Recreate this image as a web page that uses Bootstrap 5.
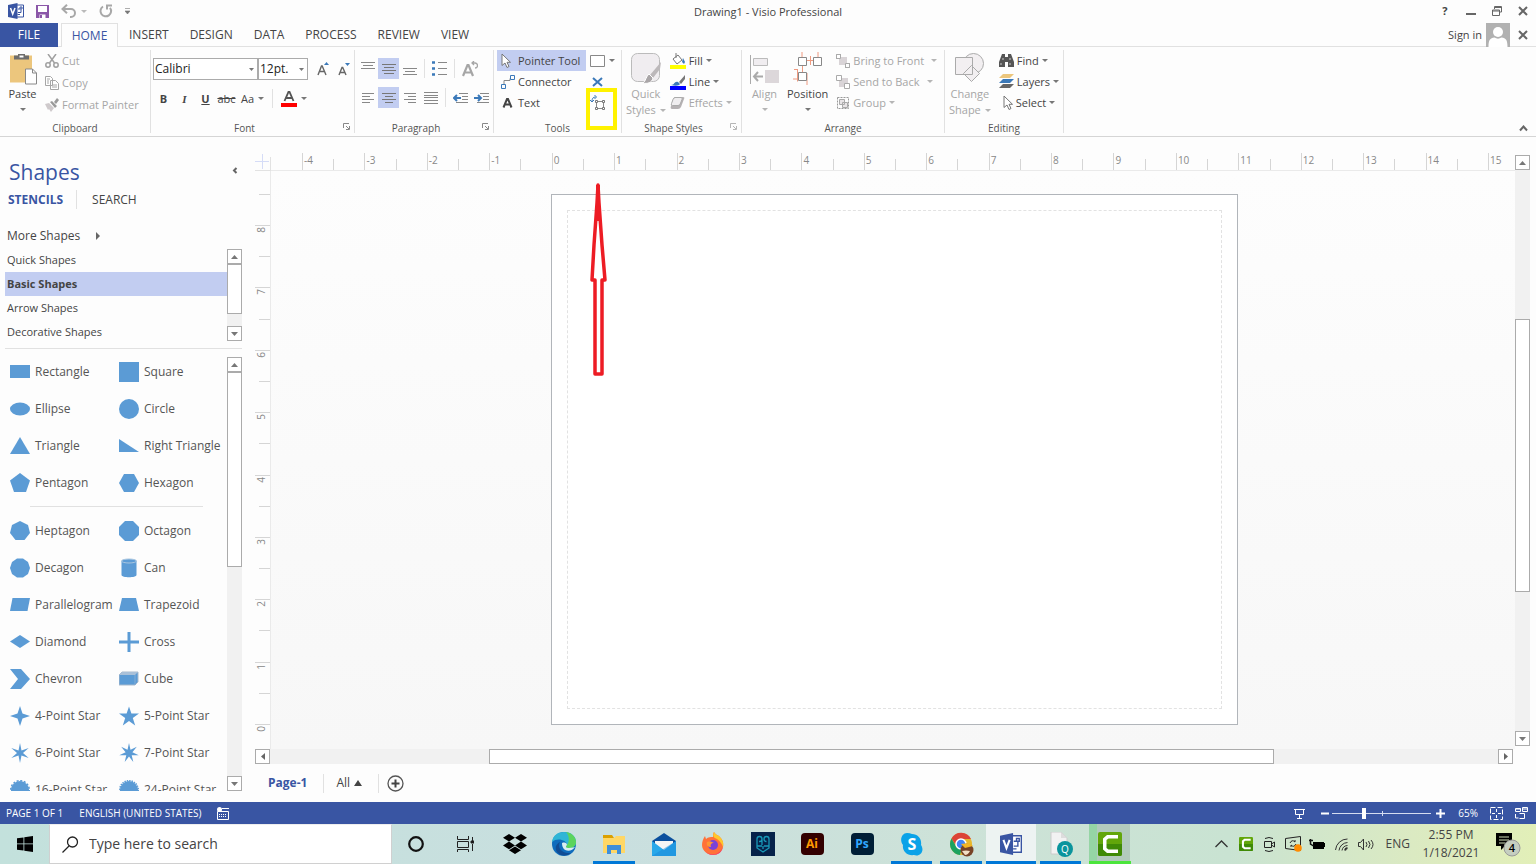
<!DOCTYPE html>
<html lang="en">
<head>
<meta charset="utf-8">
<meta name="viewport" content="width=device-width, initial-scale=1">
<title>Drawing1 - Visio Professional</title>
<link href="https://cdn.jsdelivr.net/npm/bootstrap@5.3.0/dist/css/bootstrap.min.css" rel="stylesheet">
<style>
:root{--brand:#3955a3;--pick:#c2cdf1;--ink:#444;--dim:#a6a6a6;--edge:#e1e1e1;--shape:#5b9bd5}
body{font-family:"Open Sans","Noto Sans",sans-serif;font-size:12px;line-height:16px;color:var(--ink);background:#fdfdfd;overflow:hidden}
svg{display:block;flex:none}
button{font:inherit;color:inherit;background:none;border:0;padding:0;white-space:nowrap;display:flex;align-items:center}
button:disabled{color:var(--dim)}
a{color:inherit;text-decoration:none}
.titlebar,.tabs-row,.ribbon,.status,.taskbar{flex:none}
.titlebar{height:23px;font-size:11px}
.titlebar button{height:22px}
.winbtn{width:26px;justify-content:center}
.tabs-row{height:24px;border-bottom:1px solid var(--edge)}
.tab-link{height:24px;padding:0 10px 0 11px;line-height:24px}
.tab-file{width:58px;padding:0;text-align:center;background:var(--brand);color:#fff}
.tab-on{margin-left:3px;width:57px;padding:0;text-align:center;background:#fdfdfd;border:1px solid var(--edge);border-bottom:0;color:var(--brand)}
.signin{font-size:11px}
.ribbon{height:90px;border-bottom:1px solid #d5d5d5;font-size:11px}
.rgroup{border-right:1px solid var(--edge);margin:3px 0;position:relative}
.gbody{height:69px}
.gname{font-size:10px;line-height:16px;text-align:center;color:#555;padding-top:1px}
.launcher{position:absolute;right:4px;bottom:3px}
.g-clip{width:151px}.g-font{width:204px}.g-para{width:139px}.g-tools{width:128px}.g-style{width:120px}.g-arr{width:203px}.g-edit{width:119px}
.row22{height:22px;gap:3px}
.row21{height:21px;gap:3px}
.inset{padding-left:2px}
.toolcol{width:89px;margin:0 4px 0 3px}
.car{width:0;height:0;border:3px solid transparent;border-top-color:#777;border-bottom:0;flex:none}
button:disabled .car{border-top-color:#b5b5b5}
.big{flex-direction:column;align-items:center;line-height:16px}
.big svg{margin-top:1px}
.big>.car{margin-top:6px}
.sq{width:21px;height:21px;justify-content:center}
.on{background:var(--pick)}
.vr1{width:1px;height:19px;background:var(--edge)}
.combo{appearance:none;border:1px solid #ababab;height:22px;padding:0 1px;border-radius:0;background:#fff url("data:image/svg+xml,%3Csvg xmlns='http://www.w3.org/2000/svg' width='5' height='3'%3E%3Cpath d='M0 0h5L2.5 3z' fill='%23777'/%3E%3C/svg%3E") no-repeat right 3px center;color:#222;font:inherit;font-size:12px}
.hilite{position:absolute;left:92px;top:38px;width:31px;height:42px;border:4px solid #fff200;pointer-events:none}
.work{flex:1 1 0;min-height:0}
.panel{width:246px;padding:21px 4px 11px 5px}
.panel h1{font-size:21px;line-height:28px;color:var(--brand);font-weight:400}
.panel-tabs{margin-top:4px;padding-left:3px}
.panel-tabs .vr1{margin:0 15px 0 13px}
.more{margin-top:19px;padding-left:2px;gap:16px;font-size:12px}
.stencils{margin-top:4px;font-size:11px}
.stencil{height:24px;line-height:24px;padding-left:2px;display:block}
.sbar{width:15px;background:#f1f1f1;display:flex;flex-direction:column}
.stencils .sbar{margin:1px 0 3px}
.sbar button,.hbar button{width:15px;height:15px;border:1px solid #ababab;background:#fff;justify-content:center;flex:none}
.thumb{background:#fff;border:1px solid #ababab}
.shape-grid{display:grid;grid-template-columns:109px 108px;grid-auto-rows:37px;color:#555;padding-left:5px}
.shape-grid button{gap:5px}
.shape-grid svg{fill:var(--shape)}
.rule{border-top:1px solid var(--edge)}
.inner-rule{margin:5px 24px 5px 25px}
.drawing{padding:16px 0 0 9px}
.hruler{height:18px;border-bottom:1px solid #eaeaea;padding-left:31px;font-size:10px;line-height:14px;color:#888}
.hruler span,.vruler span{flex:1 1 0;background:linear-gradient(#d5d5d5,#d5d5d5) no-repeat}
.hruler span{border-left:1px solid #d5d5d5;padding-left:1px;background-size:1px 11px;background-position:50% 100%}
.hruler .tail{flex:0 0 27px;background:none}
.vruler{width:16px;border-right:1px solid #eaeaea;font-size:10px;line-height:13px;color:#888}
.vruler span{border-top:1px solid #d5d5d5;background-size:11px 1px;background-position:100% 50%}
.vruler .head{flex:0 0 54px;border:0;background-position:100% 23px}
.vruler .tail{flex:0 0 25px;background:none}
.vruler b{display:block;font-weight:400;writing-mode:vertical-rl;transform:rotate(180deg);width:13px;text-align:right;padding-bottom:1px}
.canvas{background:linear-gradient(#fdfdfd,#f7f7f7);padding:23px 277px 24px 280px;position:relative}
.sheet{background:#fff;border:1px solid #b1b5ba;padding:15px}
.sheet div{border:1px dashed #e2e2e2;height:100%}
.arrow{position:absolute;left:318px;top:12px}
.vbar{margin:2px 6px 3px 0}
.hbar{height:15px;background:#f1f1f1;display:flex;margin-right:23px}
.pages{height:38px;padding-left:13px}
.status{height:22px;background:var(--brand);color:#fff;font-size:10px}
.status>span:first-child{padding-left:6px}
.taskbar{height:40px;background:linear-gradient(90deg,#c3e1dc,#c9dfdf 40%,#cde2d8 62%,#c9e3d2 80%,#dbeac2 92%,#e2efb8)}
.find-box{width:343px;background:#fff;border:1px solid #d0d0d0;border-top-color:#eee}
.find-box input{border:0;outline:0;font-size:14px;color:#333;background:none;width:250px}
.find-box input::placeholder{color:#444;opacity:1}
.tk{flex:1 1 0;justify-content:center;position:relative;height:40px}
.run::after{content:"";position:absolute;left:4px;right:4px;bottom:0;height:3px;background:#0078d7}
.cur{background:#edf3f2}.cur::after{left:0;right:0}
.rec{background:linear-gradient(90deg,#95d5a5 8px,#b2cabd 8px) 4px 0/41px 100% no-repeat}
.rec::after{background:#4be53c}
.tray .ti{width:24px;justify-content:center}
.clock{line-height:18px;width:74px}
.notify{margin:0 14px 0 8px}
</style>
</head>
<body class="d-flex flex-column vh-100">
<svg width="0" height="0" class="position-absolute">
<defs>
<symbol id="visio" viewBox="0 0 16 16"><path d="M7 2h8.500v12H7z" fill="#fff" stroke="#3955a3"/><path d="M0 2l9.500-2v16L0 14z" fill="#3955a3"/><path d="M2.500 5l2.200 6L7 5" fill="none" stroke="#fff" stroke-width="1.500"/><path d="M10 9.500h3v-3M10 6h2M12 4h2v2h-2zM9.500 11.500h2.500" fill="none" stroke="#3955a3"/></symbol>
<symbol id="up" viewBox="0 0 7 4"><path d="M0 4h7L3.500 0z" fill="#777"/></symbol>
<symbol id="down" viewBox="0 0 7 4"><path d="M0 0h7L3.500 4z" fill="#777"/></symbol>
<symbol id="launch" viewBox="0 0 7 7"><path d="M.5 5V.5H6M3 3l3 3M6.500 3v3.500H3" fill="none" stroke="#888"/></symbol>
<symbol id="cursor" viewBox="0 0 10 16"><path d="M1 1v11.500l3-2.500 2 4.500 2-1-2-4.200h3.500z" fill="#fff" stroke="#777"/></symbol>
<symbol id="cam" viewBox="0 0 24 24"><rect width="24" height="24" rx="2" fill="#62a60a"/><path d="M0 12h24v10a2 2 0 0 1-2 2H2a2 2 0 0 1-2-2z" fill="#3f8a06"/><path d="M20 3H9L5 6.500v11L9 21h11v-3.500h-9.500L8.500 16V8l2-1.500H20z" fill="#fff"/></symbol>
</defs></svg>

<header class="titlebar d-flex">
<div class="d-flex flex-fill w-50">
<button class="ps-2" aria-label="Visio"><svg width="16" height="16"><use href="#visio"/></svg></button>
<button class="ms-2 ps-1" aria-label="Save"><svg width="13" height="13" viewBox="0 0 13 13"><path d="M0 0h13v13H0z" fill="#8b57a8"/><path d="M2 1h9v6H2z" fill="#fff"/><path d="M3.500 9.500h6V13h-6z" fill="#fff"/><path d="M4 10h2v3H4z" fill="#8b57a8"/></svg></button>
<button class="ms-2 ps-1 gap-1" aria-label="Undo"><svg width="16" height="14" viewBox="0 0 16 14"><path d="M1.500 5H10a4 4 0 0 1 0 8H9M6 .8L1.500 5 6 9.200" fill="none" stroke="#a8a8a8" stroke-width="2"/></svg><i class="car opacity-50"></i></button>
<button class="ms-2 ps-1" aria-label="Repeat"><svg width="14" height="14" viewBox="0 0 14 14"><path d="M4 2.500A5.300 5.300 0 1 0 11 3.800M8 5.500V1.500h5" fill="none" stroke="#a8a8a8" stroke-width="2"/></svg></button>
<button class="ms-2 ps-1" aria-label="Customize"><svg width="5" height="6" viewBox="0 0 5 6"><path d="M0 .5h5M0 3h5L2.500 6z" fill="#777" stroke="#777" stroke-width=".6"/></svg></button>
</div>
<div class="align-self-center text-center text-nowrap">Drawing1 - Visio Professional</div>
<div class="d-flex flex-fill w-50 justify-content-end">
<button class="winbtn fw-bold">?</button>
<button class="winbtn" aria-label="Minimize"><svg width="10" height="10"><path d="M0 8h10" stroke="#666" stroke-width="2"/></svg></button>
<button class="winbtn" aria-label="Restore"><svg width="10" height="10" viewBox="0 0 10 10"><path d="M2.500 3V.5h7V6H8M.5 4h7v5.500h-7zM2.500 1.500h7M.5 5h7" fill="none" stroke="#666"/></svg></button>
<button class="winbtn" aria-label="Close"><svg width="10" height="10"><path d="M1 1l8 8M9 1L1 9" stroke="#666" stroke-width="2"/></svg></button>
</div>
</header>

<nav class="tabs-row d-flex">
<a href="#" class="tab-link tab-file">FILE</a><a href="#" class="tab-link tab-on">HOME</a><a href="#" class="tab-link">INSERT</a><a href="#" class="tab-link">DESIGN</a><a href="#" class="tab-link">DATA</a><a href="#" class="tab-link">PROCESS</a><a href="#" class="tab-link">REVIEW</a><a href="#" class="tab-link">VIEW</a>
<div class="ms-auto d-flex">
<button class="signin">Sign in</button>
<svg class="ms-1" width="24" height="24" viewBox="0 0 24 24"><path d="M0 0h24v24H0z" fill="#b1b1b1"/><circle cx="12" cy="9" r="5" fill="#fff"/><path d="M2.500 24c0-7 1.500-9 6-9.500 2 1.500 5 1.500 7 0 4.500.5 6 2.500 6 9.500z" fill="#fff"/></svg>
<button class="winbtn" aria-label="Close document"><svg width="10" height="10"><path d="M1 1l8 8M9 1L1 9" stroke="#666" stroke-width="2"/></svg></button>
</div>
</nav>

<section class="ribbon d-flex">
<div class="rgroup g-clip">
<div class="gbody d-flex">
<button class="big ms-2 me-2"><svg width="29" height="35" viewBox="0 0 29 34"><path d="M2 4h22v27H2z" fill="#ecc67d"/><path d="M6 8V4h4V2.500h7V4h4v4z" fill="#6d6d6d"/><path d="M11.500 4h4v2h-4z" fill="#fff"/><path d="M17.500 17.500h7l4 4v11h-11z" fill="#fff" stroke="#888"/><path d="M24.500 17.500v4h4" fill="none" stroke="#888"/></svg><span>Paste</span><i class="car"></i></button>
<div class="d-flex flex-column">
<button disabled class="row22"><svg width="14" height="14" viewBox="0 0 14 14" fill="none" stroke="#a0a0a0" stroke-width="1.500"><path d="M3 0l6.500 9M11 0L4.500 9"/><circle cx="3" cy="11" r="2.200"/><circle cx="11" cy="11" r="2.200"/></svg>Cut</button>
<button disabled class="row22"><svg width="14" height="14" viewBox="0 0 14 14" fill="#fff" stroke="#a6a6a6"><path d="M.5.500h5l2 2v7h-7zM5.500 4.500h5l3 3v6h-8zM7 9h5M7 11h5M2 3h3M2 5h2M2 7h2"/></svg>Copy</button>
<button disabled class="row22"><svg width="14" height="14" viewBox="0 0 14 14"><path d="M0 6l4-1 5 5-3 4-2-3-1 1z" fill="#cfcacc"/><path d="M5 4l2-1 5 5-2 2zM9 4l3-4 2 2-3 4z" fill="#9a9a9a"/></svg>Format Painter</button>
</div></div>
<div class="gname">Clipboard</div></div>

<div class="rgroup g-font">
<div class="gbody inset">
<div class="d-flex align-items-center pt-2">
<select class="combo" style="width:106px" aria-label="Font"><option>Calibri</option></select><select class="combo me-1" style="width:51px" aria-label="Font size"><option>12pt.</option></select>
<button class="sq" aria-label="Grow font"><svg width="12" height="15" viewBox="0 0 12 15"><path d="M1 13L4.500 4h.7L9 13M2.300 9.500h5.200" fill="none" stroke="#666" stroke-width="1.400"/><path d="M7 3h5L9.500 0z" fill="#3b79b9"/></svg></button>
<button class="sq" aria-label="Shrink font"><svg width="12" height="15" viewBox="0 0 12 15"><path d="M1 13L4 5.500h.7L8 13M2.300 10.500h4.400" fill="none" stroke="#666" stroke-width="1.400"/><path d="M7 1h5L9.500 4z" fill="#3b79b9"/></svg></button>
</div>
<div class="d-flex align-items-center mt-2">
<button class="sq fw-bold">B</button><button class="sq fw-bold fst-italic" style="font-family:'Liberation Serif',serif">I</button><button class="sq fw-bold text-decoration-underline">U</button><button class="sq"><s>abc</s></button>
<button class="gap-1 ps-1">Aa<i class="car"></i></button><i class="vr1 ms-2"></i>
<button class="gap-1 ms-2"><svg width="16" height="16" viewBox="0 0 16 16"><path d="M3.500 10L7.500.8h1L12.500 10M5 7h6" fill="none" stroke="#555" stroke-width="1.800"/><path d="M0 12h16v4H0z" fill="#f00"/></svg><i class="car"></i></button>
</div></div>
<div class="gname me-3">Font</div><button class="launcher" aria-label="Font settings"><svg width="7" height="7"><use href="#launch"/></svg></button></div>

<div class="rgroup g-para">
<div class="gbody inset">
<div class="d-flex align-items-center pt-2">
<button class="sq" aria-label="Top"><svg width="14" height="14"><path d="M0 .5h14M2 3.500h10M0 6.500h14" stroke="#888"/></svg></button>
<button class="sq on" aria-label="Middle"><svg width="14" height="14"><path d="M0 2.500h14M2 5.500h10M0 8.500h14M2 11.500h10" stroke="#777"/></svg></button>
<button class="sq" aria-label="Bottom"><svg width="14" height="14"><path d="M0 6.500h14M2 9.500h10M0 12.500h14" stroke="#888"/></svg></button>
<i class="vr1 mx-1"></i>
<button class="sq" aria-label="Bullets"><svg width="15" height="15"><path d="M0 1.500h3M0 7.500h3M0 13.500h3" stroke="#3b79b9" stroke-width="2.500"/><path d="M6 1.500h9M6 7.500h9M6 13.500h9" stroke="#888"/></svg></button>
<i class="vr1 mx-1"></i>
<button class="sq" aria-label="Rotate text"><svg width="16" height="16" viewBox="0 0 16 16"><path d="M1 15L5.500 4h1L11 15M2.500 11.500h7" fill="none" stroke="#a6a6a6" stroke-width="2.200"/><path d="M10 2h3a2.500 2.500 0 0 1 0 5M12 0l-2 2 2 2" fill="none" stroke="#a6a6a6" stroke-width="1.300"/></svg></button>
</div>
<div class="d-flex align-items-center mt-2">
<button class="sq" aria-label="Left"><svg width="12" height="12"><path d="M0 1.500h12M0 4.500h8M0 7.500h12M0 10.500h8" stroke="#888"/></svg></button>
<button class="sq on" aria-label="Center"><svg width="14" height="12"><path d="M0 1.500h14M3 4.500h8M0 7.500h14M3 10.500h8" stroke="#777"/></svg></button>
<button class="sq" aria-label="Right"><svg width="12" height="12"><path d="M0 1.500h12M4 4.500h8M0 7.500h12M4 10.500h8" stroke="#888"/></svg></button>
<button class="sq" aria-label="Justify"><svg width="14" height="12"><path d="M0 .5h14M0 3.500h14M0 5.500h14M0 8.500h14M0 11.500h14" stroke="#888"/></svg></button>
<i class="vr1 ms-1 me-1"></i>
<button class="sq" aria-label="Outdent"><svg width="15" height="12"><path d="M6 1.500h9M9 4.500h6M9 7.500h6M3 10.500h12" stroke="#888"/><path d="M1 6h7M4 3L1 6l3 3" fill="none" stroke="#3b79b9" stroke-width="2"/></svg></button>
<button class="sq" aria-label="Indent"><svg width="15" height="12"><path d="M6 1.500h9M9 4.500h6M9 7.500h6M3 10.500h12" stroke="#888"/><path d="M0 6h7M4 3l3 3-3 3" fill="none" stroke="#3b79b9" stroke-width="2"/></svg></button>
</div></div>
<div class="gname me-3">Paragraph</div><button class="launcher" aria-label="Paragraph settings"><svg width="7" height="7"><use href="#launch"/></svg></button></div>

<div class="rgroup g-tools">
<div class="gbody d-flex">
<div class="toolcol d-flex flex-column">
<button class="row21 on ps-1"><svg width="10" height="16"><use href="#cursor"/></svg><span class="ps-1">Pointer Tool</span></button>
<button class="row21 ps-1"><svg width="14" height="14" viewBox="0 0 14 14" fill="none"><path d="M3 9.500V5.500h6V3.500" stroke="#888"/><path d="M.5 9.500h4v4h-4zM9.500.500h4v4h-4z" stroke="#3b79b9"/></svg>Connector</button>
<button class="row21 ps-1"><svg width="14" height="10"><path d="M2.500 9.500L6 1h1l3.500 8.500M4 6.500h5" fill="none" stroke="#444" stroke-width="2"/></svg>Text</button>
</div>
<div class="d-flex flex-column">
<button class="row21 gap-1" aria-label="Rectangle tool"><svg width="15" height="12"><path d="M.5.500h14v11H.500z" fill="#fff" stroke="#888"/></svg><i class="car"></i></button>
<button class="row21" aria-label="Connection point"><svg width="15" height="10"><path d="M3 1l9 8M12 1L3 9" stroke="#3b79b9" stroke-width="2"/></svg></button>
<button class="row21" aria-label="Text block"><svg width="16" height="16" viewBox="0 0 16 16" fill="none"><path d="M2 6.500C2 3.500 3 2 5.500 2M4.500 0l2 2-2 2M0 5l2 2 2-2" stroke="#3b79b9"/><path d="M6.500 6.500h7v7h-7z" stroke="#888"/><path d="M5.500 5.500h2v2h-2zM12.500 5.500h2v2h-2zM5.500 12.500h2v2h-2zM12.500 12.500h2v2h-2z" fill="#fff" stroke="#777"/></svg></button>
</div></div>
<div class="gname">Tools</div><div class="hilite"></div></div>

<div class="rgroup g-style">
<div class="gbody d-flex ps-1">
<button disabled class="big me-1"><svg width="32" height="35" viewBox="0 0 32 33"><rect x="1.500" y="1.500" width="28" height="28" rx="6" fill="#f0edf0" stroke="#bbb"/><path d="M31 10l-11 13 3 3 7-9z" fill="#bcb8ba"/><path d="M19 22l4 4c-1 5-6 6-10 5 3-2 3-7 6-9z" fill="#aaa6a8" stroke="#fff"/></svg><span>Quick</span><span class="d-flex align-items-center gap-1">Styles<i class="car"></i></span></button>
<div class="d-flex flex-column">
<button class="row21"><svg width="16" height="16" viewBox="0 0 16 16"><path d="M3 6l5-4 4 5-5 4zM6 0v5" fill="#fff" stroke="#777"/><path d="M13 5l2 4-1 2-2-2z" fill="#3b79b9"/><path d="M0 12h16v4H0z" fill="#ff0"/></svg>Fill<i class="car"></i></button>
<button class="row21"><svg width="16" height="16" viewBox="0 0 16 16"><path d="M15 1L9 8l2 2 4-5z" fill="#777"/><path d="M1 11c4 0 3-4 7-3l2 2c-1 2-5 2-9 1z" fill="#3b79b9"/><path d="M0 12h16v4H0z" fill="#00f"/></svg>Line<i class="car"></i></button>
<button disabled class="row21"><svg width="16" height="14" viewBox="0 0 16 14"><path d="M5 1h8q2 0 1 2l-3 8q-1 2-3 2H2q-2 0-1-3l2-7q1-2 2-2z" fill="#b5b1b3"/><path d="M5 1.500h6q2 0 1 2l-2 5q-1 1-2 1H2.500q-2 0-1-2l1.500-4q1-2 2-2z" fill="#efedef" stroke="#aaa"/></svg>Effects<i class="car"></i></button>
</div></div>
<div class="gname me-3">Shape Styles</div><button class="launcher" disabled aria-label="Shape settings"><svg width="7" height="7" opacity=".6"><use href="#launch"/></svg></button></div>

<div class="rgroup g-arr">
<div class="gbody d-flex ps-2">
<button disabled class="big"><svg width="29" height="35" viewBox="0 0 29 33"><path d="M.5 3v29" stroke="#aaa"/><path d="M3.500 6.500h14v7h-14z" fill="#f0edf0" stroke="#bbb"/><path d="M15 18h14v13H15z" fill="#dcd7da"/><path d="M4 24.500h9M8 20l-4 4.500L8 29" fill="none" stroke="#aaa" stroke-width="2"/></svg><span>Align</span><i class="car"></i></button>
<button class="big mx-2"><svg width="30" height="35" viewBox="0 0 30 33" fill="none"><path d="M13 8.500h8M17.500 4v9M1 17.500h4M4.500 17.500v12M9.500 13v8M25 0v5M9 0v5M0 27h5M14 21v12" stroke="#ef9a80"/><path d="M5.500 5.500h8v8h-8zM20.500 5.500h8v8h-8zM5.500 20.500h8v8h-8z" fill="#fff" stroke="#888"/></svg><span>Position</span><i class="car"></i></button>
<div class="d-flex flex-column">
<button disabled class="row21"><svg width="14" height="14" viewBox="0 0 14 14"><path d="M3 3h8v8H3z" fill="#d9d4d7"/><path d="M.5 5V.500H5M9 13.500h4.500V9M.5.500h4v4h-4zM9.500 9.500h4v4h-4z" fill="#fff" stroke="#aaa"/></svg>Bring to Front<i class="car ms-1"></i></button>
<button disabled class="row21"><svg width="14" height="14" viewBox="0 0 14 14"><path d="M3 3h9v9H3z" fill="#d9d4d7"/><path d="M.5.500h5v5h-5zM8.500 8.500h5v5h-5z" fill="#fff" stroke="#aaa"/></svg>Send to Back<i class="car ms-1"></i></button>
<button disabled class="row21"><svg width="14" height="14" viewBox="0 0 14 14"><path d="M1.500 1.500h11v11h-11z" fill="none" stroke="#999" stroke-dasharray="2 1"/><path d="M3.500 3.500h5v5h-5zM6.500 6.500h5v5h-5z" fill="#e8e4e6" stroke="#aaa"/></svg>Group<i class="car"></i></button>
</div></div>
<div class="gname">Arrange</div></div>

<div class="rgroup g-edit">
<div class="gbody d-flex ps-1">
<button disabled class="big me-2"><svg width="32" height="35" viewBox="0 0 32 33" fill="#f2eff1" stroke="#aaa"><circle cx="19.500" cy="11.500" r="10"/><path d="M1.500 5.500h17v17h-17zM17.500 13.500l8 8-8 8-8-8z"/></svg><span>Change</span><span class="d-flex align-items-center gap-1">Shape<i class="car"></i></span></button>
<div class="d-flex flex-column">
<button class="row21"><svg width="15" height="13" viewBox="0 0 15 13"><path d="M3 0h3v3h3V0h3l3 8v5H9V8H6v5H0V8z" fill="#555"/><path d="M2 9v2M11 9v2M4 4v2M11 4v2" stroke="#ccc"/></svg>Find<i class="car"></i></button>
<button class="row21"><svg width="15" height="15" viewBox="0 0 15 15"><path d="M4 0h11l-4 4H0z" fill="#ecc67d"/><path d="M4 5h11l-4 4H0z" fill="#3b79b9"/><path d="M4 10h11l-4 4H0z" fill="#666"/></svg>Layers<i class="car"></i></button>
<button class="row21 ps-1"><svg width="10" height="16"><use href="#cursor"/></svg>Select<i class="car"></i></button>
</div></div>
<div class="gname">Editing</div></div>
<button class="winbtn ms-auto align-self-end mb-1" aria-label="Collapse ribbon"><svg width="9" height="7"><path d="M1 5.500l3.500-4 3.500 4" fill="none" stroke="#666" stroke-width="2"/></svg></button>
</section>

<main class="work d-flex overflow-hidden">
<aside class="panel d-flex flex-column flex-shrink-0">
<div class="d-flex justify-content-between align-items-center ps-1 pe-1"><h1 class="m-0">Shapes</h1><button class="pb-1" aria-label="Collapse panel"><svg width="6" height="7"><path d="M4.500 1L2 3.500 4.500 6" fill="none" stroke="#666" stroke-width="2"/></svg></button></div>
<div class="panel-tabs d-flex align-items-center"><a href="#" class="fw-bold" style="color:var(--brand)">STENCILS</a><i class="vr1"></i><a href="#">SEARCH</a></div>
<button class="more"><span>More Shapes</span><svg width="4" height="8"><path d="M0 0l4 4-4 4z" fill="#666"/></svg></button>
<div class="stencils d-flex">
<div class="flex-fill"><a href="#" class="stencil">Quick Shapes</a><a href="#" class="stencil on fw-bold">Basic Shapes</a><a href="#" class="stencil">Arrow Shapes</a><a href="#" class="stencil">Decorative Shapes</a></div>
<div class="sbar"><button aria-label="Up"><svg width="7" height="4"><use href="#up"/></svg></button><div class="thumb" style="flex:0 0 50px"></div><div class="flex-fill"></div><button aria-label="Down"><svg width="7" height="4"><use href="#down"/></svg></button></div>
</div>
<div class="rule mt-1 mb-1"></div>
<div class="work d-flex overflow-hidden">
<div class="flex-fill overflow-hidden">
<div class="shape-grid">
<button><svg width="20" height="20"><path d="M0 3h20v13H0z"/></svg>Rectangle</button>
<button><svg width="20" height="20"><path d="M0 0h20v20H0z"/></svg>Square</button>
<button><svg width="20" height="20"><ellipse cx="10" cy="10" rx="10" ry="6.500"/></svg>Ellipse</button>
<button><svg width="20" height="20"><circle cx="10" cy="10" r="10"/></svg>Circle</button>
<button><svg width="20" height="20"><path d="M10 1l10 17H0z"/></svg>Triangle</button>
<button><svg width="20" height="20"><path d="M0 3l20 13H0z"/></svg>Right Triangle</button>
<button><svg width="20" height="20"><path d="M10 0l10 7.500L16 19H4L0 7.500z"/></svg>Pentagon</button>
<button><svg width="20" height="20"><path d="M5 1h10l5 9-5 9H5l-5-9z"/></svg>Hexagon</button>
</div>
<div class="rule inner-rule"></div>
<div class="shape-grid">
<button><svg width="20" height="20"><path d="M10 0l8 4 2 8-5.500 7h-9L0 12l2-8z"/></svg>Heptagon</button>
<button><svg width="20" height="20"><path d="M6 0h8l6 6v8l-6 6H6l-6-6V6z"/></svg>Octagon</button>
<button><svg width="20" height="20"><path d="M7 .5h6L18 4l2 6-2 6-5 3.500H7L2 16l-2-6 2-6z"/></svg>Decagon</button>
<button><svg width="20" height="20"><path d="M2.500 3v14c0 3 15 3 15 0V3z"/><ellipse cx="10" cy="3" rx="7.500" ry="2" stroke="#a9c6e0"/></svg>Can</button>
<button><svg width="20" height="20"><path d="M2.500 3H20l-2.500 13H0z"/></svg>Parallelogram</button>
<button><svg width="20" height="20"><path d="M3 3h14l3 13H0z"/></svg>Trapezoid</button>
<button><svg width="20" height="20"><path d="M10 3l10 6.500L10 16 0 9.500z"/></svg>Diamond</button>
<button><svg width="20" height="20"><path d="M8.500 0h3v8.500H20v3h-8.500V20h-3v-8.500H0v-3h8.500z"/></svg>Cross</button>
<button><svg width="20" height="20"><path d="M0 0h11l9 10-9 10H0l8-10z"/></svg>Chevron</button>
<button><svg width="20" height="20"><path d="M0 6l3-3h16v10l-3 3H0z" stroke="#a9b9cb"/><path d="M0 6l3-3h16l-3 3z" fill="#a9c0d8"/><path d="M16 6v10" stroke="#83acd5"/></svg>Cube</button>
<button><svg width="20" height="20"><path d="M10 0l2.500 7.500L20 10l-7.500 2.500L10 20l-2.500-7.500L0 10l7.500-2.500z"/></svg>4-Point Star</button>
<button><svg width="20" height="20"><path d="M10 .5l2.400 7H20L13.800 12l2.400 7.500L10 15l-6.200 4.500L6.200 12 0 7.500h7.600z"/></svg>5-Point Star</button>
<button><svg width="20" height="20"><path d="M10 0L11.500 7.400 18.700 5 13 10 18.700 15 11.500 12.600 10 20 8.500 12.600 1.300 15 7 10 1.300 5 8.500 7.400z"/></svg>6-Point Star</button>
<button><svg width="20" height="20"><path d="M10 0L11.500 6.800 17.800 3.800 13.400 9.200 19.700 12.200 12.700 12.200 14.300 19 10 13.500 5.700 19 7.300 12.200 .3 12.200 6.600 9.200 2.200 3.800 8.500 6.800z"/></svg>7-Point Star</button>
<button><svg width="20" height="20"><circle cx="10" cy="10" r="9"/><circle cx="10" cy="10" r="9.300" fill="none" stroke="#5b9bd5" stroke-width="1.500" stroke-dasharray="2 1.650"/></svg>16-Point Star</button>
<button><svg width="20" height="20"><circle cx="10" cy="10" r="9"/><circle cx="10" cy="10" r="9.300" fill="none" stroke="#5b9bd5" stroke-width="1.500" stroke-dasharray="1.400 1.030"/></svg>24-Point Star</button>
</div></div>
<div class="sbar mt-1"><button aria-label="Up"><svg width="7" height="4"><use href="#up"/></svg></button><div class="thumb" style="flex:0 0 45%"></div><div class="flex-fill"></div><button aria-label="Down"><svg width="7" height="4"><use href="#down"/></svg></button></div>
</div>
</aside>

<section class="drawing d-flex flex-column flex-fill overflow-hidden">
<div class="work d-flex">
<div class="d-flex flex-column flex-fill">
<div class="d-flex"><svg width="16" height="18"><path d="M0 8.500h14M7.500 1v15" stroke="#d5dcf7"/><path d="M15.500 4v14M0 17.500h16" stroke="#e2e2e2"/></svg>
<div class="hruler d-flex flex-fill"><span>-4</span><span>-3</span><span>-2</span><span>-1</span><span>0</span><span>1</span><span>2</span><span>3</span><span>4</span><span>5</span><span>6</span><span>7</span><span>8</span><span>9</span><span>10</span><span>11</span><span>12</span><span>13</span><span>14</span><span class="tail">15</span></div></div>
<div class="d-flex flex-fill">
<div class="vruler d-flex flex-column"><span class="head"></span><span><b>8</b></span><span><b>7</b></span><span><b>6</b></span><span><b>5</b></span><span><b>4</b></span><span><b>3</b></span><span><b>2</b></span><span><b>1</b></span><span class="tail"><b>0</b></span></div>
<div class="canvas flex-fill"><div class="sheet h-100"><div></div></div>
<svg class="arrow" width="18" height="194" viewBox="0 0 18 194" fill="none" stroke="#ed1c24" stroke-width="3.500" stroke-linejoin="round"><path d="M9 2L8 20 5 62 3 97h3v94h7V97h3L13 62 10 20z"/><path d="M9 2v36" stroke-width="4"/></svg>
</div></div></div>
<div class="sbar vbar"><button aria-label="Up"><svg width="7" height="4"><use href="#up"/></svg></button><div style="flex:150"></div><div class="thumb" style="flex:272"></div><div style="flex:140"></div><button aria-label="Down"><svg width="7" height="4"><use href="#down"/></svg></button></div>
</div>
<div class="hbar"><button aria-label="Left"><svg width="4" height="7"><path d="M4 0v7L0 3.500z" fill="#666"/></svg></button><div style="flex:219"></div><div class="thumb" style="flex:785"></div><div style="flex:224"></div><button aria-label="Right"><svg width="4" height="7"><path d="M0 0v7l4-3.500z" fill="#666"/></svg></button></div>
<div class="pages d-flex align-items-center"><button class="fw-bold me-3" style="color:var(--brand)">Page-1</button><i class="vr1 me-2"></i><button class="ms-1 gap-1 me-2">All<svg width="8" height="6"><path d="M0 6h8L4 0z" fill="#444"/></svg></button><i class="vr1 mx-2"></i><button aria-label="New page"><svg width="17" height="17"><circle cx="8.500" cy="8.500" r="7.500" fill="none" stroke="#555" stroke-width="1.300"/><path d="M8.500 4.500v8M4.500 8.500h8" stroke="#444" stroke-width="2"/></svg></button></div>
</section>
</main>

<footer class="status d-flex align-items-center">
<span class="me-3">PAGE 1 OF 1</span><span class="me-3">ENGLISH (UNITED STATES)</span><svg width="12" height="13" viewBox="0 0 12 13"><path d="M.5 4.500h11v8H.5zM5 1.500h7" fill="none" stroke="#fff"/><circle cx="2.500" cy="2.500" r="2.500" fill="#fff"/><path d="M2 7.500h8M2 9.500h8" stroke="#fff" stroke-dasharray="1 1"/></svg>
<button class="ms-auto me-3" aria-label="Presentation"><svg width="11" height="11" fill="none" stroke="#fff"><path d="M0 1.500h11M1.500 1v5.500h8V1M5.500 7v3M3 10.500h5"/></svg></button>
<svg width="125" height="13" viewBox="0 0 125 13"><path d="M0 6.500h8M115 6.500h9M119.500 2v9" stroke="#fff" stroke-width="2"/><path d="M11 6.500h99M61.500 4v5" stroke="#d5dcf0"/><path d="M41 1h4v11h-4z" fill="#fff"/></svg>
<span class="ms-2 me-2 ps-1">65%</span>
<button class="ms-1 me-2" aria-label="Fit page"><svg width="13" height="13" fill="none" stroke="#fff"><path d="M.5.500h12v12H.500z" stroke-dasharray="5 2"/><path d="M6.500 2v3M6.500 8v3M2 6.500h3M8 6.500h3"/></svg></button>
<button class="ms-1 me-2" aria-label="Switch windows"><svg width="13" height="12" fill="none" stroke="#fff"><path d="M.5 1.500h5v3h-5zM7.500.500h5v4h-5zM4.500 6.500h5v5h-5M.500 7v4h3M7 2h6M1 2h5"/></svg></button>
</footer>

<div class="taskbar d-flex align-items-stretch">
<button style="width:49px" class="justify-content-center" aria-label="Start"><svg width="16" height="16" viewBox="0 0 16 16"><path d="M0 2.300L6.500 1.400v6.100H0zM7.300 1.300L16 0v7.500H7.300zM0 8.300h6.500v6.200L0 13.700zM7.300 8.300H16V16l-8.700-1.300z"/></svg></button>
<label class="find-box d-flex align-items-center ps-2 gap-2"><svg class="ms-1" width="17" height="17" fill="none" stroke="#222" stroke-width="1.300"><circle cx="10.500" cy="6" r="5"/><path d="M7 10l-6.500 6.500"/></svg><input type="text" placeholder="Type here to search" aria-label="Search"></label>
<button style="width:48px" class="justify-content-center" aria-label="Cortana"><svg width="16" height="16"><circle cx="8" cy="8" r="6.800" fill="none" stroke="#111" stroke-width="2.200"/></svg></button>
<button style="width:50px" class="justify-content-center" aria-label="Task view"><svg width="17" height="16" fill="none" stroke="#222"><path d="M.5 0v3.500h11V0M.5 5.500h11v6H.5zM.5 16v-2.500h11V16M15.500 1v4M15.500 8v7"/><path d="M14 5h3v2h-3z" fill="#111"/></svg></button>
<div class="d-flex" style="width:645px">
<button class="tk" aria-label="Dropbox"><svg width="24" height="20" viewBox="0 0 24 20"><path d="M6 0l6 3.800-6 3.800L0 3.800zM18 0l6 3.800-6 3.800-6-3.800zM6 7.600l6 3.800-6 3.800-6-3.800zM18 7.600l6 3.800-6 3.800-6-3.800zM12 12.600l6 3.700-6 3.700-6-3.700z"/></svg></button>
<button class="tk" aria-label="Edge"><svg width="24" height="24" viewBox="0 0 24 24"><circle cx="12" cy="12" r="12" fill="#0f6cbd"/><path d="M0 10C1 3 6 0 12 0c8 0 12 5 12 10 0 4-3 6-7 6-3 0-4-1-2-3 0-5-10-8-15-3z" fill="#2fb5d6"/><path d="M14 0c6 1 10 5 10 10 0 4-3 6-7 6-3 0-4-1-2-3 3-4 2-10-1-13z" fill="#5bd45c"/><path d="M8 10c-3 6 2 12 11 11-8 6-17 0-15-7 1-2 2-3 4-4z" fill="#123e83" opacity=".7"/><path d="M10 11c3-1 5 0 5 2-2 2-1 3 2 3 3 0 5-1 6-1-3 5-13 6-13-4z" fill="#d9edf0"/></svg></button>
<button class="tk run" aria-label="File Explorer"><svg width="22" height="19" viewBox="0 0 22 19"><path d="M0 0h9l2 3H0z" fill="#dba000"/><path d="M0 3l11 0 2-2h9v17H0z" fill="#ffd765"/><path d="M4 19v-9h14v9h-4v-4H8v4z" fill="#3f8fd9"/></svg></button>
<button class="tk" aria-label="Mail"><svg width="24" height="23" viewBox="0 0 24 23"><path d="M0 8l12-8 12 8v6H0z" fill="#0b4f9d"/><path d="M3 8h18v9H3z" fill="#f5f5f5"/><path d="M0 8l12 9 12-9v15H0z" fill="#28a8ea"/><path d="M24 8v15H0z" fill="#1a87d8" opacity=".5"/></svg></button>
<button class="tk" aria-label="Firefox"><svg width="24" height="24" viewBox="0 0 24 24"><path d="M13 0c1 2 3 3 5 4 3 3 5 6 4 11-1 5-5 8-10 8S1 19 1 13c0-3 1-6 3-9l1 3c2-2 5-2 7-2 0-2 0-4 1-5z" fill="#ff7139"/><path d="M13 0c1 2 3 3 5 4 3 3 5 6 4 11-1-3-3-6-6-8-3-1-5-3-3-7z" fill="#ffc72b"/><path d="M3 17c3 7 15 8 19-2-1 5-5 8-10 8-4 0-7-2-9-6z" fill="#f33770"/><circle cx="12" cy="13" r="5" fill="#7a41d8"/><path d="M6 10c3-2 5 0 7 1-3 0-4 2-3 4-3 0-5-2-4-5z" fill="#ff9532"/></svg></button>
<button class="tk" aria-label="PokerGO"><svg width="24" height="24" viewBox="0 0 24 24"><path d="M0 0h24v24H0z" fill="#06224a"/><path d="M6 11V7q0-2.500 2.500-2.500T11 7 8.500 9.500H8M18 11V7q0-2.500-2.500-2.500T13 7t2.500 2.500M11 7v6M6 11v5l6 4 6-4v-5M6 14h5M13 14h5M12 14v3" fill="none" stroke="#1899b8" stroke-width="1.300"/></svg></button>
<button class="tk" aria-label="Illustrator"><svg width="24" height="22" viewBox="0 0 24 22"><rect x="1" width="23" height="22" rx="4" fill="#330000"/><text x="12" y="15" text-anchor="middle" font-weight="700" font-size="12" fill="#ff9a00">Ai</text></svg></button>
<button class="tk" aria-label="Photoshop"><svg width="24" height="22" viewBox="0 0 24 22"><rect x="1" width="23" height="22" rx="4" fill="#001e36"/><text x="12" y="15" text-anchor="middle" font-weight="700" font-size="12" fill="#31a8ff">Ps</text></svg></button>
<button class="tk run" aria-label="Skype"><svg width="22" height="23" viewBox="0 0 22 23"><path d="M6 0q3 0 5 1c6 0 10 5 9 11 4 6-1 12-7 10C6 23 1 18 2 12-2 7 1 0 6 0z" fill="#0aa2e8"/><text x="11" y="17" text-anchor="middle" font-weight="700" font-size="16" fill="#fff">S</text></svg></button>
<button class="tk run" aria-label="Chrome"><svg width="25" height="25" viewBox="0 0 25 25"><circle cx="12" cy="12" r="11" fill="#e7b82c"/><path d="M2.500 6.500A11 11 0 0 1 22 7H12a5 5 0 0 0-4.500 7z" fill="#dc4437"/><path d="M2.500 6.500L7.500 15a5 5 0 0 0 5 2L11 23A11 11 0 0 1 2.500 6.500z" fill="#1aa260"/><circle cx="12" cy="12" r="5" fill="#4285f4" stroke="#fff" stroke-width="1.500"/><circle cx="18" cy="18" r="6.500" fill="#774326"/><path d="M12 12l8-1 4 3-8 2z" fill="#f2b524"/><path d="M13 19q4-1 8 0-2 4-5 4z" fill="#f3dfc4"/></svg></button>
<button class="tk run cur" aria-label="Visio window"><svg width="22" height="22"><use href="#visio"/></svg></button>
<button class="tk run" aria-label="Q document"><svg width="24" height="25" viewBox="0 0 24 25"><path d="M2 0h10l6 6v16H2z" fill="#f2f2f2" stroke="#ccc"/><path d="M12 0v6h6" fill="#ddd"/><circle cx="16" cy="17" r="8" fill="#0a949c"/><text x="16" y="21" text-anchor="middle" font-size="10" fill="#fff">Q</text></svg></button>
<button class="tk run rec" aria-label="Camtasia"><svg width="24" height="24"><use href="#cam"/></svg></button>
</div>
<div class="tray d-flex align-items-center ms-auto">
<button class="ti" aria-label="Hidden icons"><svg width="13" height="8"><path d="M.5 7l6-6 6 6" fill="none" stroke="#333" stroke-width="1.300"/></svg></button>
<button class="ti" aria-label="Camtasia tray"><svg width="14" height="14"><use href="#cam"/></svg></button>
<button class="ti" aria-label="Meet now"><svg width="13" height="15" fill="none" stroke="#222"><path d="M2 1.500q4-2 8 0M2 13.500q4 2 8 0M1.500 4.500h7v6h-7zM8.500 7l3-2v5l-3-2"/></svg></button>
<button class="ti" aria-label="Update"><svg width="17" height="16" viewBox="0 0 17 16"><path d="M.5 2.500l15-2v14l-15-2zM5 7q2-4 5-1V4M11 8q-2 4-5 1v2" fill="none" stroke="#222"/><circle cx="13" cy="12" r="3.800" fill="#ff8c00"/></svg></button>
<button class="ti" aria-label="Battery"><svg width="17" height="11"><path d="M4 3h11v1h1v4h-1v2H4z"/><path d="M1.500 0v5l3 2M0 1.500h4" fill="none" stroke="#111" stroke-width="1.500"/></svg></button>
<button class="ti" aria-label="Network"><svg width="13" height="13" fill="none" stroke="#333"><path d="M.5 12A12 12 0 0 1 12.500 1M4 12.500A9 9 0 0 1 12.500 4.500M7 12.500A6 6 0 0 1 12.500 7.500"/><path d="M10 12.500a3 3 0 0 1 2.500-2.500" stroke-width="2"/></svg></button>
<button class="ti" aria-label="Volume"><svg width="16" height="13" fill="none" stroke="#333"><path d="M.5 4.500h2l3-3.500v11l-3-3.500h-2zM8 4q2 2.500 0 5M10.500 3q3 3.500 0 7M13 2q4 4.500 0 9"/></svg></button>
<button class="ms-2 me-1">ENG</button>
<div class="clock text-center"><div>2:55 PM</div><div>1/18/2021</div></div>
<button class="notify" aria-label="Notifications"><svg width="26" height="26" viewBox="0 0 26 26"><path d="M0 2h16v13H9l-4 4v-4H0z"/><path d="M3 6h10M3 9h10M3 12h6" stroke="#cfdcb8"/><circle cx="16" cy="17" r="8" fill="#c5cec0" stroke="#999"/><text x="16" y="21" text-anchor="middle" font-size="11" font-weight="600">4</text></svg></button>
</div></div>
</body>
</html>
